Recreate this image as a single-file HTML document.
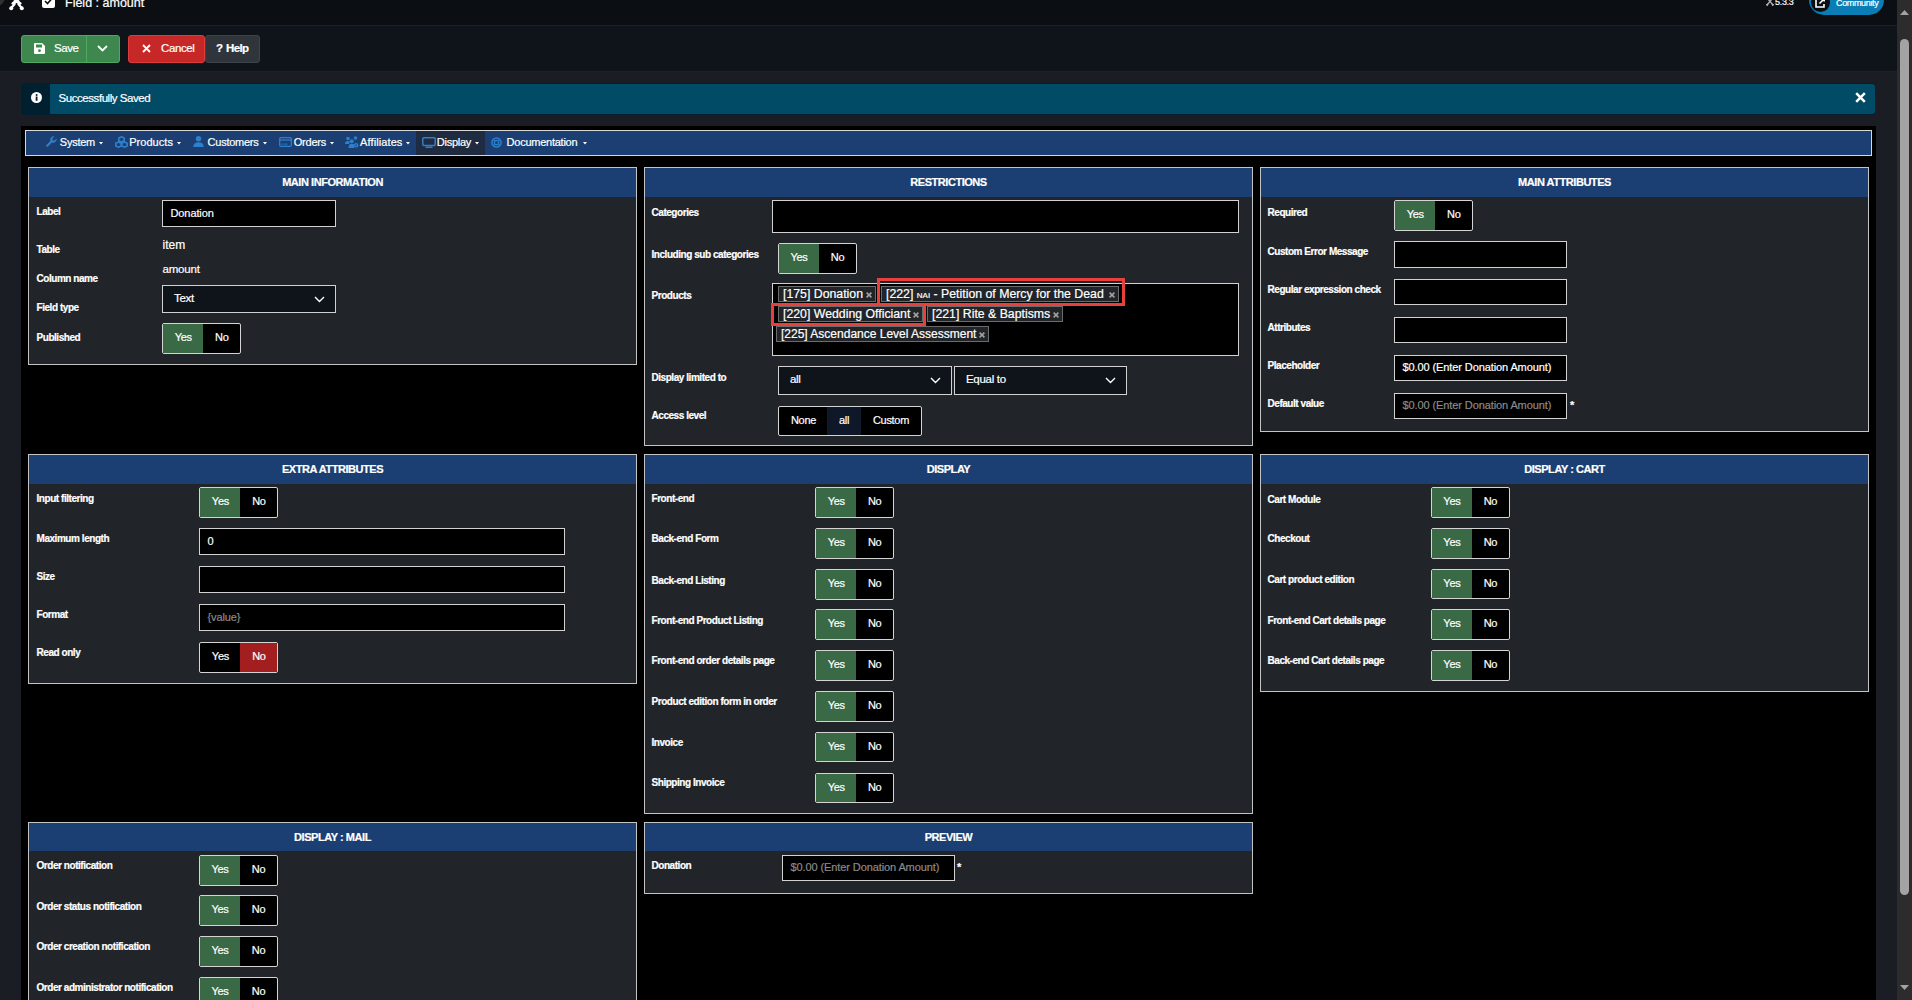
<!DOCTYPE html><html><head><meta charset='utf-8'><style>
*{margin:0;padding:0;box-sizing:border-box}
html,body{width:1912px;height:1000px;overflow:hidden;background:#1a1d24;font-family:"Liberation Sans", sans-serif;color:#fff;-webkit-text-stroke:0.2px currentColor}
.a{position:absolute}
.lbl{position:absolute;font-weight:bold;font-size:10px;letter-spacing:-0.45px;line-height:12px;white-space:nowrap;color:#fff}
.pnl{position:absolute;border:1px solid #c4c4c4;background:#212428}
.ph{position:absolute;left:0;right:0;top:0;height:29px;background:#1b3f73;text-align:center;font-weight:bold;font-size:11px;letter-spacing:-0.45px;line-height:29px;color:#fff}
.inp{position:absolute;background:#000;border:1px solid #d2d2d2;height:26px;font-size:11px;letter-spacing:-0.1px;line-height:24px;padding-left:7.5px;white-space:nowrap;color:#fff}
.tg{position:absolute;height:31px;width:79px;border:1px solid #d4d4d4;border-radius:2px;background:#000;overflow:hidden;font-size:11px;letter-spacing:-0.3px;line-height:28px}
.tg .y{position:absolute;left:0;top:0;bottom:0;width:40px;text-align:center}
.tg .n{position:absolute;right:0;top:0;bottom:0;width:37px;text-align:center}
.g{background:#3a6946}
.r{background:#a31f1f}
.sel{position:absolute;background:#0f131a;border:1px solid #d2d2d2;height:28px;font-size:11.5px;letter-spacing:-0.3px;line-height:26px;padding-left:11px;color:#fff}
.sel svg{position:absolute;right:10px;top:10px}
.tag{position:absolute;height:16px;background:#212428;border:1px solid #6b6b6b;font-size:12.5px;line-height:14px;padding-left:4px;white-space:nowrap;color:#fff}
.tag .x{position:absolute;right:3px;top:5px}
.red{position:absolute;border:3px solid #e8403f}
.nav{position:absolute;font-size:11px;letter-spacing:-0.25px;line-height:24px;white-space:nowrap;color:#fff}
</style></head><body>
<div class='a' style='left:0;top:0;width:1897px;height:25px;background:#0b0e13'></div>
<div class='a' style='left:0;top:25px;width:1897px;height:1px;background:#1d2129'></div>
<div class='a' style='left:0;top:26px;width:1897px;height:45px;background:#0f141b'></div>
<div class='a' style='left:0;top:71px;width:1897px;height:1px;background:#1d2129'></div>
<div class='a' style='left:65px;top:-5.3px;font-size:12.5px;line-height:16px;color:#fff;white-space:nowrap'>Field : amount</div>
<svg class='a' style='left:9px;top:-4px' width='15' height='15' viewBox='0 0 15 15'><g stroke='#fff' stroke-width='2.3' fill='none' stroke-linecap='round'><path d='M2.2 12 L9.5 3.5'/><path d='M12.8 12 L5.5 3.5'/><path d='M3.5 7.5 Q7.5 3 11.5 7.5'/></g><circle cx='2.2' cy='12.2' r='2' fill='#fff'/><circle cx='12.8' cy='12.2' r='2' fill='#fff'/><circle cx='7.5' cy='8' r='0.9' fill='#0b0e13'/></svg>
<div class='a' style='left:-22px;top:-20px;width:28px;height:28px;border-radius:50%;background:#2f3031'></div>
<svg class='a' style='left:42px;top:-5px' width='13' height='13' viewBox='0 0 13 13'><rect x='0' y='0' width='13' height='13' rx='2' fill='#fff'/><path d='M3 6 L5.5 8.5 L10 3.5' stroke='#0b0e13' stroke-width='1.6' fill='none'/></svg>
<svg class='a' style='left:1766px;top:-2px' width='8' height='8' viewBox='0 0 8 8'><g stroke='#aaa' stroke-width='1.4' fill='none'><path d='M1 7 L6 1 M7 7 L2 1'/></g><circle cx='1.2' cy='6.8' r='1.1' fill='#bbb'/><circle cx='6.8' cy='6.8' r='1.1' fill='#bbb'/></svg>
<div class='a' style='left:1775px;top:-3px;font-size:9px;line-height:10px;color:#fff;letter-spacing:-0.3px'>5.3.3</div>
<div class='a' style='left:1809px;top:-15px;width:75px;height:30px;border-radius:15px;background:#0a7db4'></div>
<div class='a' style='left:1811px;top:-7px;width:19px;height:19px;border-radius:50%;background:#0b0e13'></div>
<svg class='a' style='left:1815px;top:-3px' width='10' height='11' viewBox='0 0 10 11'><path d='M4 2 H1 V10 H9 V7' stroke='#fff' stroke-width='1.6' fill='none'/><path d='M4.5 6.5 L9 2 M6 1.5 H9.2 V4.5' stroke='#fff' stroke-width='1.6' fill='none'/></svg>
<div class='a' style='left:1836px;top:-2.5px;font-size:9px;line-height:10px;color:#fff;letter-spacing:-0.35px'>Community</div>
<div class='a' style='left:1897px;top:0;width:15px;height:1000px;background:#2c2c2c'></div>
<div class='a' style='left:1900px;top:39px;width:9px;height:856px;border-radius:4.5px;background:#a3a3a3'></div>
<svg class='a' style='left:1900px;top:10px' width='9' height='5'><path d='M0 5 L4.5 0 L9 5 Z' fill='#a3a3a3'/></svg>
<svg class='a' style='left:1900px;top:985px' width='9' height='5'><path d='M0 0 L4.5 5 L9 0 Z' fill='#a3a3a3'/></svg>
<div class='a' style='left:21px;top:35px;width:99px;height:28px;border-radius:3px;background:#3e8850;border:1px solid #4da860'></div>
<div class='a' style='left:86px;top:35px;width:1px;height:28px;background:#4da860'></div>
<svg class='a' style='left:34px;top:43px' width='11' height='11' viewBox='0 0 11 11'><path d='M0 1 Q0 0 1 0 H8 L11 3 V10 Q11 11 10 11 H1 Q0 11 0 10 Z' fill='#fff'/><rect x='2' y='1.5' width='6' height='3' fill='#3e8850'/><circle cx='5.5' cy='7.7' r='1.4' fill='#3e8850'/></svg>
<div class='a' style='left:54px;top:41px;font-size:11.5px;line-height:14px;letter-spacing:-0.4px'>Save</div>
<svg class='a' style='left:97px;top:45px' width='11' height='7' viewBox='0 0 11 7'><path d='M1 1 L5.5 5.5 L10 1' stroke='#fff' stroke-width='1.8' fill='none'/></svg>
<div class='a' style='left:128px;top:35px;width:77px;height:28px;border-radius:3px;background:#c62828;border:1px solid #de3a3a'></div>
<svg class='a' style='left:142px;top:44px' width='9' height='9' viewBox='0 0 9 9'><path d='M1 1 L8 8 M8 1 L1 8' stroke='#fff' stroke-width='1.8'/></svg>
<div class='a' style='left:161px;top:41px;font-size:11.5px;line-height:14px;letter-spacing:-0.4px'>Cancel</div>
<div class='a' style='left:205px;top:35px;width:55px;height:28px;border-radius:3px;background:#30343b;border:1px solid #3e424a'></div>
<div class='a' style='left:216px;top:41px;font-size:11.5px;line-height:14px;font-weight:bold;letter-spacing:-0.4px'>?</div>
<div class='a' style='left:226px;top:41px;font-size:11.5px;line-height:14px;font-weight:bold;letter-spacing:-0.6px'>Help</div>
<div class='a' style='left:21px;top:83px;width:1854px;height:32px;border-radius:3px;background:#01202f'></div>
<div class='a' style='left:50px;top:84px;width:1825px;height:30px;border-radius:0 3px 3px 0;background:#024b66'></div>
<svg class='a' style='left:31px;top:92px' width='11' height='11' viewBox='0 0 11 11'><circle cx='5.5' cy='5.5' r='5.5' fill='#fff'/><rect x='4.7' y='4.5' width='1.8' height='4.3' fill='#01202f'/><circle cx='5.6' cy='2.9' r='1' fill='#01202f'/></svg>
<div class='a' style='left:58.6px;top:91px;font-size:11.5px;line-height:14px;letter-spacing:-0.45px'>Successfully Saved</div>
<svg class='a' style='left:1855px;top:92px' width='11' height='11' viewBox='0 0 11 11'><path d='M1.2 1.2 L9.8 9.8 M9.8 1.2 L1.2 9.8' stroke='#fff' stroke-width='2.5'/></svg>
<div class='a' style='left:21px;top:126px;width:1855px;height:900px;background:#000'></div>
<div class='a' style='left:25px;top:130px;width:1847px;height:26px;background:#1b3f73;border:1px solid #d8d8d8'></div>
<div class='a' style='left:416px;top:131px;width:69px;height:24px;background:#172a45'></div>
<div class='a' style='left:416px;top:131px;width:69px;height:24px;background:#1f2b40'></div>
<svg class='a' style='left:45px;top:136px' width='12' height='12' viewBox='0 0 12 12'><path d='M11.6 2.6 L9.6 4.6 L7.6 4.4 L7.4 2.4 L9.4 0.4 A3.6 3.6 0 0 0 5.4 5 L0.7 9.7 A1.3 1.3 0 0 0 2.3 11.3 L7 6.6 A3.6 3.6 0 0 0 11.6 2.6 Z' fill='#2f7fca'/><circle cx='1.6' cy='10.4' r='0.6' fill='#1b3f73'/></svg>
<svg class='a' style='left:115px;top:136px' width='13' height='12' viewBox='0 0 13 12'><g fill='none' stroke='#2f7fca' stroke-width='1.6'><path d='M6.5 0.8 L9.2 2 V4.8 L6.5 6 L3.8 4.8 V2 Z'/><path d='M3.5 6 L6.2 7.2 V10 L3.5 11.2 L0.8 10 V7.2 Z'/><path d='M9.5 6 L12.2 7.2 V10 L9.5 11.2 L6.8 10 V7.2 Z'/></g></svg>
<svg class='a' style='left:193px;top:136px' width='11' height='11' viewBox='0 0 11 11'><circle cx='5.5' cy='2.8' r='2.7' fill='#2f7fca'/><path d='M0.3 11 Q0.3 6.3 5.5 6.3 Q10.7 6.3 10.7 11 Z' fill='#2f7fca'/></svg>
<svg class='a' style='left:279px;top:137px' width='13' height='10' viewBox='0 0 13 10'><rect x='0.7' y='0.7' width='11.6' height='8.6' rx='1' fill='none' stroke='#2f7fca' stroke-width='1.3'/><rect x='0.7' y='2.4' width='11.6' height='1.3' fill='#2f7fca'/><rect x='2.5' y='6.6' width='2' height='1' fill='#2f7fca'/><rect x='5.3' y='6.6' width='3' height='1' fill='#2f7fca'/></svg>
<svg class='a' style='left:345px;top:136px' width='14' height='12' viewBox='0 0 14 12'><g fill='#2f7fca'><circle cx='3' cy='2.5' r='1.8'/><circle cx='10.5' cy='2' r='1.8'/><circle cx='6.7' cy='5.2' r='2'/><path d='M0 8 Q0 5 3 5 Q4.5 5 5 6 Q4 7 4 8 Z'/><path d='M3.5 12 Q3.5 7.8 6.7 7.8 Q8.5 7.8 9.3 9 V12 Z'/><circle cx='11.2' cy='9.3' r='2.2'/></g><circle cx='11.2' cy='9.3' r='0.8' fill='#1b3f73'/></svg>
<svg class='a' style='left:422px;top:137px' width='14' height='11' viewBox='0 0 14 11'><rect x='0.8' y='0.8' width='12.4' height='7.6' rx='1' fill='none' stroke='#2f7fca' stroke-width='1.5'/><rect x='3.5' y='9.5' width='7' height='1.4' rx='0.5' fill='#2f7fca'/></svg>
<svg class='a' style='left:491px;top:137px' width='11' height='11' viewBox='0 0 11 11'><circle cx='5.5' cy='5.5' r='4.6' fill='none' stroke='#2f7fca' stroke-width='1.5'/><circle cx='5.5' cy='5.5' r='2.2' fill='none' stroke='#2f7fca' stroke-width='1.3'/><path d='M2.2 2.2 L3.9 3.9 M8.8 2.2 L7.1 3.9 M2.2 8.8 L3.9 7.1 M8.8 8.8 L7.1 7.1' stroke='#2f7fca' stroke-width='1.3'/></svg>
<div class='nav' style='left:59.8px;top:136.3px;line-height:12px;letter-spacing:-0.25px'>System</div>
<svg class='a' style='left:99px;top:142px' width='4' height='2.5'><path d='M0 0 H4 L2 2.5 Z' fill='#fff'/></svg>
<div class='nav' style='left:129.2px;top:136.3px;line-height:12px;letter-spacing:0.05px'>Products</div>
<svg class='a' style='left:177px;top:142px' width='4' height='2.5'><path d='M0 0 H4 L2 2.5 Z' fill='#fff'/></svg>
<div class='nav' style='left:207.6px;top:136.3px;line-height:12px;letter-spacing:-0.25px'>Customers</div>
<svg class='a' style='left:263px;top:142px' width='4' height='2.5'><path d='M0 0 H4 L2 2.5 Z' fill='#fff'/></svg>
<div class='nav' style='left:293.8px;top:136.3px;line-height:12px;letter-spacing:-0.25px'>Orders</div>
<svg class='a' style='left:329.5px;top:142px' width='4' height='2.5'><path d='M0 0 H4 L2 2.5 Z' fill='#fff'/></svg>
<div class='nav' style='left:360.1px;top:136.3px;line-height:12px;letter-spacing:0.1px'>Affiliates</div>
<svg class='a' style='left:406.4px;top:142px' width='4' height='2.5'><path d='M0 0 H4 L2 2.5 Z' fill='#fff'/></svg>
<div class='nav' style='left:436.8px;top:136.3px;line-height:12px;letter-spacing:-0.25px'>Display</div>
<svg class='a' style='left:475.3px;top:142px' width='4' height='2.5'><path d='M0 0 H4 L2 2.5 Z' fill='#fff'/></svg>
<div class='nav' style='left:506.6px;top:136.3px;line-height:12px;letter-spacing:-0.25px'>Documentation</div>
<svg class='a' style='left:582.7px;top:142px' width='4' height='2.5'><path d='M0 0 H4 L2 2.5 Z' fill='#fff'/></svg>
<div class='pnl' style='left:28px;top:167px;width:609px;height:198px'><div class='ph' style='height:29px;line-height:29px'>MAIN INFORMATION</div></div>
<div class='lbl' style='left:36.5px;top:206.1px'>Label</div>
<div class='inp' style='left:162px;top:200px;width:174px;height:27px;line-height:24.2px;color:#fff'>Donation</div>
<div class='lbl' style='left:36.5px;top:243.6px'>Table</div>
<div class='a' style='left:162.5px;top:238px;font-size:12px;line-height:14px;letter-spacing:0px'>item</div>
<div class='lbl' style='left:36.5px;top:272.6px'>Column name</div>
<div class='a' style='left:162.5px;top:262px;font-size:11.5px;line-height:14px;letter-spacing:-0.2px'>amount</div>
<div class='lbl' style='left:36.5px;top:301.6px'>Field type</div>
<div class='sel' style='left:162px;top:285px;width:174px;height:28px;line-height:24px'>Text<svg width='11' height='7' viewBox='0 0 11 7'><path d='M1 1 L5.5 5.5 L10 1' stroke='#fff' stroke-width='1.4' fill='none'/></svg></div>
<div class='lbl' style='left:36.5px;top:331.6px'>Published</div>
<div class='tg' style='left:162.3px;top:323.3px;height:30.6px;line-height:27.200000000000003px'><div class='y g'>Yes</div><div class='n '>No</div></div>
<div class='pnl' style='left:644px;top:167px;width:609px;height:279px'><div class='ph' style='height:29px;line-height:29px'>RESTRICTIONS</div></div>
<div class='lbl' style='left:651.5px;top:206.6px'>Categories</div>
<div class='inp' style='left:772px;top:200px;width:467px;height:33px;line-height:30.2px;color:#fff'></div>
<div class='lbl' style='left:651.5px;top:248.6px'>Including sub categories</div>
<div class='tg' style='left:778px;top:243px;height:30.6px;line-height:27.200000000000003px'><div class='y g'>Yes</div><div class='n '>No</div></div>
<div class='lbl' style='left:651.5px;top:289.6px'>Products</div>
<div class='inp' style='left:772px;top:283px;width:467px;height:73px;line-height:70.2px;color:#fff'></div>
<div class='tag' style='left:778px;top:286px;width:98px;font-size:12.3px'>[175] Donation<svg class='x' width='6' height='6'><path d='M0.6 0.6 L5.4 5.4 M5.4 0.6 L0.6 5.4' stroke='#a0a0a0' stroke-width='1.6'/></svg></div>
<div class='tag' style='left:881px;top:286px;width:238px;font-size:12.3px'>[222] <span style="font-size:8px">NAI</span> - Petition of Mercy for the Dead<svg class='x' width='6' height='6'><path d='M0.6 0.6 L5.4 5.4 M5.4 0.6 L0.6 5.4' stroke='#a0a0a0' stroke-width='1.6'/></svg></div>
<div class='tag' style='left:778px;top:306px;width:145px;font-size:12.3px'>[220] Wedding Officiant<svg class='x' width='6' height='6'><path d='M0.6 0.6 L5.4 5.4 M5.4 0.6 L0.6 5.4' stroke='#a0a0a0' stroke-width='1.6'/></svg></div>
<div class='tag' style='left:927px;top:306px;width:136px;font-size:12.3px'>[221] Rite &amp; Baptisms<svg class='x' width='6' height='6'><path d='M0.6 0.6 L5.4 5.4 M5.4 0.6 L0.6 5.4' stroke='#a0a0a0' stroke-width='1.6'/></svg></div>
<div class='tag' style='left:776px;top:326px;width:213px;font-size:12px'>[225] Ascendance Level Assessment<svg class='x' width='6' height='6'><path d='M0.6 0.6 L5.4 5.4 M5.4 0.6 L0.6 5.4' stroke='#a0a0a0' stroke-width='1.6'/></svg></div>
<div class='red' style='left:877px;top:278px;width:248px;height:28px'></div>
<div class='red' style='left:771px;top:303px;width:155px;height:23px'></div>
<div class='lbl' style='left:651.5px;top:371.6px'>Display limited to</div>
<div class='sel' style='left:778px;top:366px;width:174px;height:29px;line-height:25px'>all<svg width='11' height='7' viewBox='0 0 11 7'><path d='M1 1 L5.5 5.5 L10 1' stroke='#fff' stroke-width='1.4' fill='none'/></svg></div>
<div class='sel' style='left:954px;top:366px;width:173px;height:29px;line-height:25px'>Equal to<svg width='11' height='7' viewBox='0 0 11 7'><path d='M1 1 L5.5 5.5 L10 1' stroke='#fff' stroke-width='1.4' fill='none'/></svg></div>
<div class='lbl' style='left:651.5px;top:410.1px'>Access level</div>
<div class='tg' style='left:778px;top:405.5px;width:144px;height:30px;line-height:26px'><div class='a' style='left:0;top:0;width:49px;height:28px;text-align:center'>None</div><div class='a' style='left:48px;top:0;width:34px;height:28px;text-align:center;background:#0e1828'>all</div><div class='a' style='left:82px;top:0;width:60px;height:28px;text-align:center'>Custom</div></div>
<div class='pnl' style='left:1260px;top:167px;width:609px;height:265px'><div class='ph' style='height:29px;line-height:29px'>MAIN ATTRIBUTES</div></div>
<div class='lbl' style='left:1267.5px;top:206.9px'>Required</div>
<div class='tg' style='left:1394.3px;top:200.2px;height:30.6px;line-height:27.200000000000003px'><div class='y g'>Yes</div><div class='n '>No</div></div>
<div class='lbl' style='left:1267.5px;top:246.2px'>Custom Error Message</div>
<div class='inp' style='left:1394px;top:241px;width:173px;height:27px;line-height:24.2px;color:#fff'></div>
<div class='lbl' style='left:1267.5px;top:284.2px'>Regular expression check</div>
<div class='inp' style='left:1394px;top:279px;width:173px;height:26px;line-height:23.2px;color:#fff'></div>
<div class='lbl' style='left:1267.5px;top:322.3px'>Attributes</div>
<div class='inp' style='left:1394px;top:317px;width:173px;height:26px;line-height:23.2px;color:#fff'></div>
<div class='lbl' style='left:1267.5px;top:360.2px'>Placeholder</div>
<div class='inp' style='left:1394px;top:355px;width:173px;height:26px;line-height:23.2px;color:#fff'>$0.00 (Enter Donation Amount)</div>
<div class='lbl' style='left:1267.5px;top:398.2px'>Default value</div>
<div class='inp' style='left:1394px;top:393px;width:173px;height:26px;line-height:23.2px;color:#8a8a8a'>$0.00 (Enter Donation Amount)</div>
<div class='a' style='left:1570px;top:398px;font-size:11px;line-height:14px;font-weight:bold'>*</div>
<div class='pnl' style='left:28px;top:454px;width:609px;height:230px'><div class='ph' style='height:29px;line-height:29px'>EXTRA ATTRIBUTES</div></div>
<div class='lbl' style='left:36.5px;top:492.7px'>Input filtering</div>
<div class='tg' style='left:199.4px;top:487.2px;height:30.6px;line-height:27.200000000000003px'><div class='y g'>Yes</div><div class='n '>No</div></div>
<div class='lbl' style='left:36.5px;top:532.8px'>Maximum length</div>
<div class='inp' style='left:199px;top:528px;width:366px;height:27px;line-height:24.2px;color:#fff'>0</div>
<div class='lbl' style='left:36.5px;top:570.6px'>Size</div>
<div class='inp' style='left:199px;top:566px;width:366px;height:27px;line-height:24.2px;color:#fff'></div>
<div class='lbl' style='left:36.5px;top:608.8px'>Format</div>
<div class='inp' style='left:199px;top:604px;width:366px;height:27px;line-height:24.2px;color:#8a8a8a'>{value}</div>
<div class='lbl' style='left:36.5px;top:646.8px'>Read only</div>
<div class='tg' style='left:199.4px;top:642.2px;height:30.6px;line-height:27.200000000000003px'><div class='y '>Yes</div><div class='n r'>No</div></div>
<div class='pnl' style='left:644px;top:454px;width:609px;height:360px'><div class='ph' style='height:29px;line-height:29px'>DISPLAY</div></div>
<div class='lbl' style='left:651.5px;top:492.7px'>Front-end</div>
<div class='tg' style='left:815.2px;top:487px;height:30.6px;line-height:27.200000000000003px'><div class='y g'>Yes</div><div class='n '>No</div></div>
<div class='lbl' style='left:651.5px;top:532.5px'>Back-end Form</div>
<div class='tg' style='left:815.2px;top:528.3px;height:30.6px;line-height:27.200000000000003px'><div class='y g'>Yes</div><div class='n '>No</div></div>
<div class='lbl' style='left:651.5px;top:574.6px'>Back-end Listing</div>
<div class='tg' style='left:815.2px;top:569.2px;height:30.6px;line-height:27.200000000000003px'><div class='y g'>Yes</div><div class='n '>No</div></div>
<div class='lbl' style='left:651.5px;top:614.6px'>Front-end Product Listing</div>
<div class='tg' style='left:815.2px;top:609.3px;height:30.6px;line-height:27.200000000000003px'><div class='y g'>Yes</div><div class='n '>No</div></div>
<div class='lbl' style='left:651.5px;top:654.8px'>Front-end order details page</div>
<div class='tg' style='left:815.2px;top:650.2px;height:30.6px;line-height:27.200000000000003px'><div class='y g'>Yes</div><div class='n '>No</div></div>
<div class='lbl' style='left:651.5px;top:695.7px'>Product edition form in order</div>
<div class='tg' style='left:815.2px;top:691.4px;height:30.6px;line-height:27.200000000000003px'><div class='y g'>Yes</div><div class='n '>No</div></div>
<div class='lbl' style='left:651.5px;top:736.6px'>Invoice</div>
<div class='tg' style='left:815.2px;top:731.6px;height:30.6px;line-height:27.200000000000003px'><div class='y g'>Yes</div><div class='n '>No</div></div>
<div class='lbl' style='left:651.5px;top:776.7px'>Shipping Invoice</div>
<div class='tg' style='left:815.2px;top:772.5px;height:30.6px;line-height:27.200000000000003px'><div class='y g'>Yes</div><div class='n '>No</div></div>
<div class='pnl' style='left:1260px;top:454px;width:609px;height:238px'><div class='ph' style='height:29px;line-height:29px'>DISPLAY : CART</div></div>
<div class='lbl' style='left:1267.5px;top:493.6px'>Cart Module</div>
<div class='tg' style='left:1430.9px;top:487.2px;height:30.6px;line-height:27.200000000000003px'><div class='y g'>Yes</div><div class='n '>No</div></div>
<div class='lbl' style='left:1267.5px;top:532.6px'>Checkout</div>
<div class='tg' style='left:1430.9px;top:528px;height:30.6px;line-height:27.200000000000003px'><div class='y g'>Yes</div><div class='n '>No</div></div>
<div class='lbl' style='left:1267.5px;top:573.8px'>Cart product edition</div>
<div class='tg' style='left:1430.9px;top:568.9px;height:30.6px;line-height:27.200000000000003px'><div class='y g'>Yes</div><div class='n '>No</div></div>
<div class='lbl' style='left:1267.5px;top:614.6px'>Front-end Cart details page</div>
<div class='tg' style='left:1430.9px;top:609.1px;height:30.6px;line-height:27.200000000000003px'><div class='y g'>Yes</div><div class='n '>No</div></div>
<div class='lbl' style='left:1267.5px;top:654.9px'>Back-end Cart details page</div>
<div class='tg' style='left:1430.9px;top:650px;height:30.6px;line-height:27.200000000000003px'><div class='y g'>Yes</div><div class='n '>No</div></div>
<div class='pnl' style='left:28px;top:822px;width:609px;height:218px'><div class='ph' style='height:28px;line-height:28px'>DISPLAY : MAIL</div></div>
<div class='lbl' style='left:36.5px;top:860.1px'>Order notification</div>
<div class='tg' style='left:199px;top:855.2px;height:30.6px;line-height:27.200000000000003px'><div class='y g'>Yes</div><div class='n '>No</div></div>
<div class='lbl' style='left:36.5px;top:901.2px'>Order status notification</div>
<div class='tg' style='left:199px;top:895.4px;height:30.6px;line-height:27.200000000000003px'><div class='y g'>Yes</div><div class='n '>No</div></div>
<div class='lbl' style='left:36.5px;top:941.1px'>Order creation notification</div>
<div class='tg' style='left:199px;top:936.2px;height:30.6px;line-height:27.200000000000003px'><div class='y g'>Yes</div><div class='n '>No</div></div>
<div class='lbl' style='left:36.5px;top:982.2px'>Order administrator notification</div>
<div class='tg' style='left:199px;top:977.4px;height:30.6px;line-height:27.200000000000003px'><div class='y g'>Yes</div><div class='n '>No</div></div>
<div class='pnl' style='left:644px;top:822px;width:609px;height:72px'><div class='ph' style='height:28px;line-height:28px'>PREVIEW</div></div>
<div class='lbl' style='left:651.5px;top:859.9px'>Donation</div>
<div class='inp' style='left:782px;top:855px;width:173px;height:26px;line-height:23.2px;color:#8a8a8a'>$0.00 (Enter Donation Amount)</div>
<div class='a' style='left:957px;top:860px;font-size:11px;line-height:14px;font-weight:bold'>*</div>
</body></html>
